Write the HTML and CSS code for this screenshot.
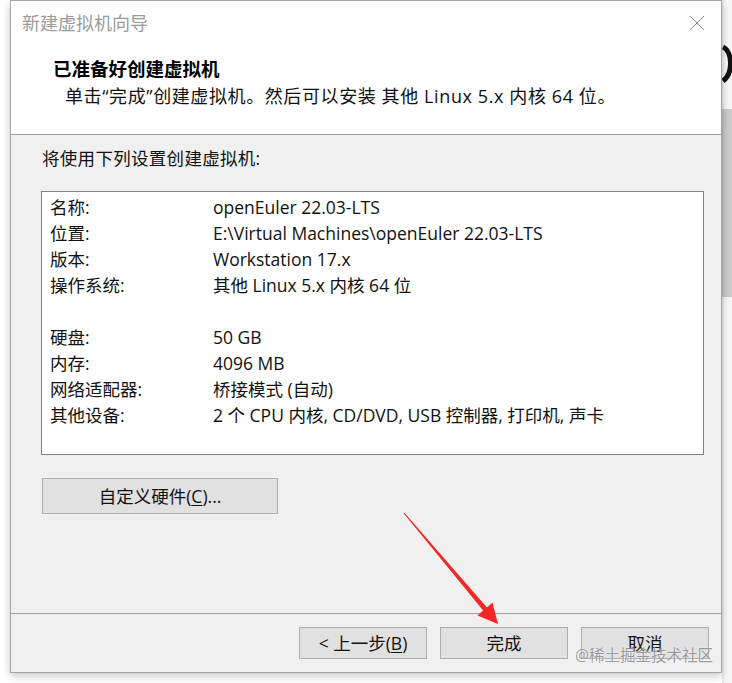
FILE: index.html
```html
<!DOCTYPE html>
<html lang="zh-CN">
<head>
<meta charset="utf-8">
<title>新建虚拟机向导</title>
<link rel="stylesheet" href="styles.css">
</head>
<body>
<div class="page">
  <div class="backdrop">
    <svg class="arc" width="10" height="40" viewBox="0 0 10 40"><path d="M1 2 C 10 6, 12 28, 1 36" fill="none" stroke="#111" stroke-width="5"/></svg>
    <div class="band"></div>
  </div>
  <div class="dialog">
    <div class="header">
      <div class="title">新建虚拟机向导</div>
      <svg class="close" width="16" height="16" viewBox="0 0 16 16"><path d="M1 1 L15 15 M15 1 L1 15" stroke="#8a8a8a" stroke-width="1" fill="none"/></svg>
      <div class="heading">已准备好创建虚拟机</div>
      <div class="subtitle">单击“完成”创建虚拟机。然后可以安装 其他 Linux 5.x 内核 64 位。</div>
    </div>
    <div class="body">
      <div class="intro">将使用下列设置创建虚拟机:</div>
      <div class="summary">
        <div class="row"><span class="label">名称:</span><span class="value">openEuler 22.03-LTS</span></div>
        <div class="row"><span class="label">位置:</span><span class="value">E:\Virtual Machines\openEuler 22.03-LTS</span></div>
        <div class="row"><span class="label">版本:</span><span class="value">Workstation 17.x</span></div>
        <div class="row"><span class="label">操作系统:</span><span class="value">其他 Linux 5.x 内核 64 位</span></div>
        <div class="row empty"></div>
        <div class="row"><span class="label">硬盘:</span><span class="value">50 GB</span></div>
        <div class="row"><span class="label">内存:</span><span class="value">4096 MB</span></div>
        <div class="row"><span class="label">网络适配器:</span><span class="value">桥接模式 (自动)</span></div>
        <div class="row"><span class="label">其他设备:</span><span class="value">2 个 CPU 内核, CD/DVD, USB 控制器, 打印机, 声卡</span></div>
      </div>
      <button class="btn custom">自定义硬件(<u>C</u>)...</button>
    </div>
    <div class="footer">
      <button class="btn">&lt; 上一步(<u>B</u>)</button>
      <button class="btn">完成</button>
      <button class="btn">取消</button>
    </div>
  </div>
  <svg class="arrow" width="732" height="683" viewBox="0 0 732 683">
    <polygon points="404.4,512.7 487,607.4 492.5,602.5 498,624 477.5,615.5 483.1,610.6 403.6,513.3" fill="#f32727"/>
  </svg>
  <div class="watermark">@稀土掘金技术社区</div>
</div>
</body>
</html>
```
FILE: styles.css
```css
* { box-sizing: border-box; }
html, body { margin: 0; padding: 0; background: #fff; }
body {
  font-family: "Open Sans", "Noto Sans CJK SC", sans-serif;
  font-size: 17.5px;
  color: #111;
}
.page {
  position: relative;
  width: 732px;
  height: 683px;
  overflow: hidden;
}
.backdrop {
  position: absolute;
  left: 722px;
  top: 0;
  width: 10px;
  height: 683px;
  background: linear-gradient(to right, #e4e4e4 0, #f6f6f6 3px, #f7f7f7 100%);
}
.backdrop .arc {
  position: absolute;
  left: 0;
  top: 45px;
}
.band {
  position: absolute;
  left: 0;
  top: 109px;
  width: 10px;
  height: 188px;
  background: linear-gradient(to right, #b9b9b9 0, #c8c8c8 3px, #cdcdcd 100%);
}
.dialog {
  position: relative;
  margin-left: 10px;
  width: 712px;
  height: 673px;
  border: 1px solid #a6a6a6;
  background: #f0f0f0;
  box-shadow: 0 3px 8px rgba(0,0,0,0.22);
  display: flex;
  flex-direction: column;
}
.header {
  position: relative;
  height: 134px;
  flex: none;
  background: #fff;
  border-bottom: 1px solid #a0a0a0;
}
.title {
  padding: 10px 0 0 11px;
  line-height: 24px;
  font-size: 18px;
  color: #9a9a9a;
}
.close {
  position: absolute;
  left: 678px;
  top: 14px;
}
.heading {
  margin-top: 21px;
  padding-left: 42px;
  line-height: 26px;
  font-size: 18.5px;
  font-weight: 700;
  color: #000;
}
.subtitle {
  margin-top: 1px;
  padding-left: 54px;
  line-height: 26px;
  font-size: 18px;
  letter-spacing: 0.6px;
  color: #111;
}
.body {
  height: 478px;
  flex: none;
  padding: 10px 0 0 0;
}
.intro {
  padding-left: 31px;
  line-height: 26px;
  letter-spacing: 0.3px;
}
.summary {
  margin: 20px 0 0 30px;
  width: 663px;
  height: 264px;
  background: #fff;
  border: 1px solid #828282;
  padding: 2px 0 0 8px;
}
.row {
  display: flex;
  height: 26px;
  line-height: 26px;
  white-space: nowrap;
}
.label { width: 163px; flex: none; }
.btn {
  font: inherit;
  color: #111;
  background: #e1e1e1;
  border: 1px solid #adadad;
  padding: 0;
  width: 128px;
  height: 32px;
  line-height: 28px;
  text-align: center;
}
.btn u { text-underline-offset: 2px; }
.custom {
  display: block;
  margin: 23px 0 0 31px;
  width: 236px;
  height: 36px;
}
.footer {
  flex: 1;
  border-top: 1px solid #a0a0a0;
  display: flex;
  justify-content: flex-end;
  align-items: flex-start;
  gap: 13px;
  padding: 13px 12px 0 0;
}
.arrow {
  position: absolute;
  left: 0;
  top: 0;
  pointer-events: none;
}
.watermark {
  position: absolute;
  left: 575px;
  top: 644px;
  font-size: 15.5px;
  line-height: 22px;
  color: rgba(125,125,125,0.75);
  text-shadow: 0 0 2px rgba(255,255,255,0.9);
  white-space: nowrap;
}
```
